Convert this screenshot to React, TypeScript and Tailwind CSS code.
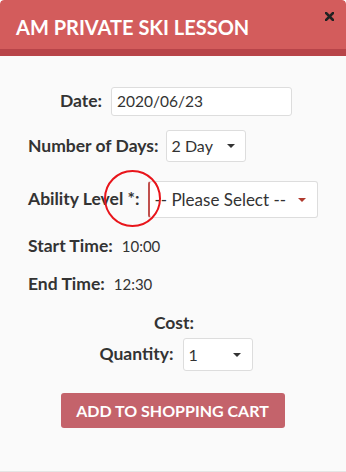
import React from 'react';

function Caret({ color = '#333' }: { color?: string }) {
  return (
    <svg width="8" height="4" viewBox="0 0 8 4" className="shrink-0">
      <path d="M0 0h8L4 4z" fill={color} />
    </svg>
  );
}

export default function App() {
  return (
    <div className="w-[346px] h-[472px] bg-[#fafafa] text-[#333] font-['Lato',sans-serif] relative overflow-hidden rounded-t-[4px] border-b border-[#e5e5e5]">
      {/* Header */}
      <div className="bg-[#d35c5c] border-b-[7px] border-[#b84449] h-[56px] flex items-start relative rounded-t-[4px]">
        <h1 className="text-white font-bold text-[20px] pl-4 pt-[13px] leading-[28px]">AM PRIVATE SKI LESSON</h1>
        <svg width="9" height="9" viewBox="0 0 9 9" className="absolute right-[12px] top-[12px]">
          <path d="M1 1l7 7M8 1L1 8" stroke="#222" strokeWidth="2.6" strokeLinecap="square" />
        </svg>
      </div>

      <div className="text-[15px]">
        {/* Date */}
        <div className="flex items-center justify-center gap-[9px] mt-[31px] pl-[6px]">
          <label className="font-bold text-[17.5px]">Date:</label>
          <div className="w-[181px] h-[29px] border border-[#ddd] rounded-[3px] bg-white flex items-center px-[5px] text-[15.5px]">2020/06/23</div>
        </div>

        {/* Number of Days */}
        <div className="flex items-center gap-[7px] mt-[14px] pl-[28px]">
          <label className="font-bold text-[17.5px]">Number of Days:</label>
          <div className="w-[80px] h-[32px] border border-[#ddd] rounded-[3px] bg-white flex items-center justify-between pl-[5px] pr-[10px] text-[16px]">
            <span>2 Day</span>
            <Caret />
          </div>
        </div>

        {/* Ability Level */}
        <div className="flex items-center gap-[9px] mt-[19px] pl-[28px]">
          <label className="font-bold text-[17.5px]">Ability Level *:</label>
          <div className="w-[170px] h-[37px] border border-[#ddd] border-l-[2px] border-l-[#c0504d] rounded-[3px] bg-white flex items-center justify-between pl-[4px] pr-[11px] text-[17px]">
            <span>-- Please Select --</span>
            <Caret color="#b03a2e" />
          </div>
        </div>

        {/* Start Time */}
        <div className="flex items-center gap-[9px] mt-[17px] pl-[28px] h-[22px]">
          <span className="font-bold text-[17.5px]">Start Time:</span>
          <span>10:00</span>
        </div>

        {/* End Time */}
        <div className="flex items-center gap-[9px] mt-[16px] pl-[28px] h-[22px]">
          <span className="font-bold text-[17.5px]">End Time:</span>
          <span>12:30</span>
        </div>

        {/* Cost */}
        <div className="flex justify-center mt-[15px] h-[22px] pl-[2px]">
          <span className="font-bold text-[17.5px]">Cost:</span>
        </div>

        {/* Quantity */}
        <div className="flex items-center justify-center gap-[9px] mt-[6px] pl-[6px]">
          <label className="font-bold text-[17.5px]">Quantity:</label>
          <div className="w-[70px] h-[33px] border border-[#ddd] rounded-[3px] bg-white flex items-center justify-between pl-[5px] pr-[11px] text-[16px]">
            <span>1</span>
            <Caret />
          </div>
        </div>

        {/* Button */}
        <div className="flex justify-center mt-[22px] pr-[1px]">
          <button className="w-[224px] h-[35px] bg-[#c4636b] text-white font-bold text-[16px] uppercase rounded-[3px]">Add to Shopping Cart</button>
        </div>
      </div>

      {/* annotation circle */}
      <div className="absolute left-[104px] top-[170px] w-[57px] h-[57px] rounded-full border-2 border-[#e8151b]"></div>
    </div>
  );
}
